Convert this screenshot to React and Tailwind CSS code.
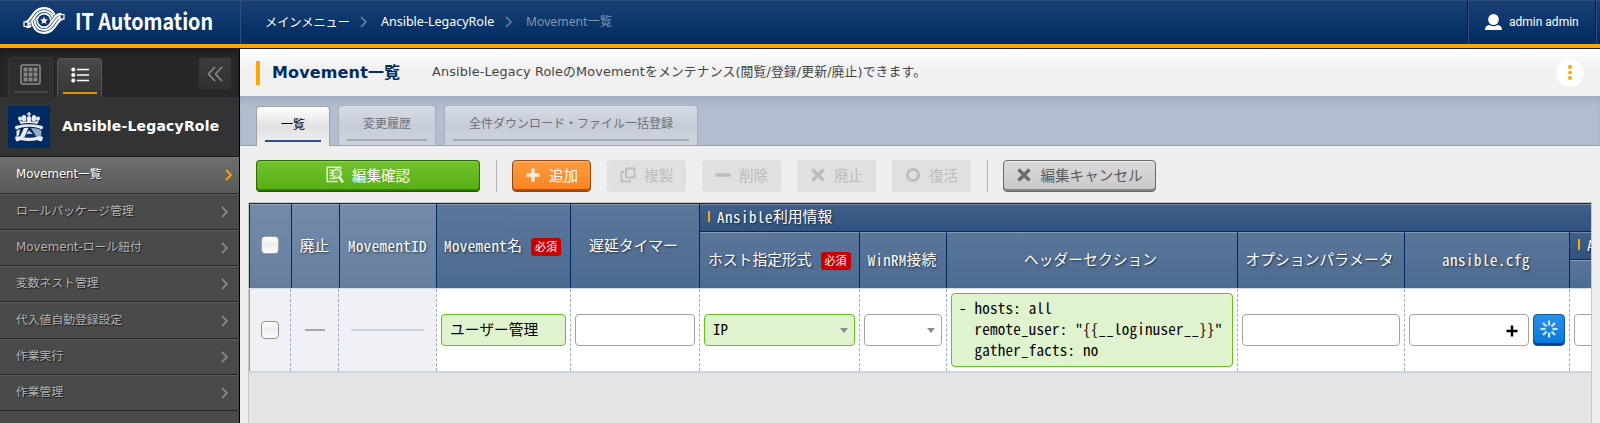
import React from "react";

const CHEVRON = "M1 1 L6 6 L1 11";
const UI = "font-['DejaVu_Sans','Noto_Sans_CJK_JP',sans-serif]";
const JP = "font-['Noto_Sans_CJK_JP',sans-serif]";
const MONO = "font-['Noto_Sans_Mono_CJK_JP','Liberation_Mono','Noto_Sans_CJK_JP',monospace]";

function Chevron({ className }) {
  return (
    <svg viewBox="0 0 7 12" className={className} fill="none" stroke="currentColor" strokeWidth="1.8">
      <path d={CHEVRON} />
    </svg>
  );
}

function LogoBand() {
  const d = "M3 18.500 L5.500 18 C11 15 12.500 5 21 5 C27 5 30 9.500 30.500 15";
  return (
    <g>
      <path d={d} stroke="#123767" strokeWidth="8.800" />
      <path d={d} stroke="#fff" strokeWidth="7.800" />
      <path d={d} stroke="#123767" strokeWidth="3.400" />
      <path d={d} stroke="#fff" strokeWidth="2" />
      <rect x="1" y="16" width="4" height="4.500" fill="#123767" stroke="#fff" strokeWidth="1.200" />
    </g>
  );
}

function Logo() {
  return (
    <svg viewBox="0 0 42 30" className="h-[30px] w-[42px] shrink-0" fill="none">
      <LogoBand />
      <g transform="rotate(180 21 14.500)"><LogoBand /></g>
      <circle cx="21" cy="14.500" r="5.900" fill="#0f3466" />
      <path fill="#fff" d="M21 10.500 L22.100 13.300 L25 13.400 L22.700 15.200 L23.500 18 L21 16.500 L18.500 18 L19.300 15.200 L17 13.400 L19.900 13.300 Z" />
    </svg>
  );
}

function RoleIcon() {
  return (
    <svg viewBox="0 0 42 42" className="h-[42px] w-[42px] shrink-0 bg-[#002b62]" fill="none">
      <g fill="#e9edf2">
        <path d="M20.300 6h1.400v1.500h1.500v1.300h-1.500v1.500h-1.400v-1.500h-1.500V7.500h1.500z" />
        <ellipse cx="21" cy="13.200" rx="2.200" ry="3.300" />
        <ellipse cx="16" cy="12.200" rx="2.300" ry="3.200" />
        <ellipse cx="26" cy="12.200" rx="2.300" ry="3.200" />
        <circle cx="12" cy="12.500" r="2" />
        <circle cx="30" cy="12.500" r="2" />
        <path d="M11 13.500 L14 15.500 L28 15.500 L31 13.500 L29.500 18 Q21 16.200 12.500 18 Z" />
        <path d="M7 21.500 Q7 19.500 10 19.500 Q21 17.200 32 19.500 Q35 19.500 35 21.500 Q35 23.500 33 23.500 Q30 21 21 20.800 Q12 21 9 23.500 Q7 23.500 7 21.500Z" />
        <path d="M8.500 25 L12 22.800 L11 29 L8.500 31 Z M11.800 31 L16 22 L20.500 21.800 L16.500 31 Z" />
        <path opacity=".65" d="M23 22 Q31 22 33.500 25 L33 31 L28.500 31 Z" />
        <path d="M21 24.500 L25 28.500 L21 27.500 L18 28.500 Z" />
        <path d="M7 31 Q9 30 12 30.500 Q21 33 30 30.500 Q33 30 35 31 L34 35 Q31 35.500 29.500 34 Q21 35.800 12.500 34 Q11 35.500 8 35 Z" />
      </g>
    </svg>
  );
}

const menu = [
  ["Movement一覧", "h-[37px]", "tracking-[-0.05px]"],
  ["ロールパッケージ管理", "h-[36px]", ""],
  ["Movement-ロール紐付", "h-[36px]", ""],
  ["変数ネスト管理", "h-[36px]", ""],
  ["代入値自動登録設定", "h-[37px]", ""],
  ["作業実行", "h-[36px]", ""],
  ["作業管理", "h-[36px]", ""],
];

function Sidebar() {
  return (
    <aside className="flex w-[240px] shrink-0 flex-col border-r border-black bg-[#494b4a]">
      <div className="flex h-12 items-end bg-[#262728] pl-2 shadow-[inset_0_4px_5px_rgba(0,0,0,0.25)]">
        <div className="flex h-10 w-[45px] flex-col items-center rounded-t border border-b-0 border-[#363738] bg-[#2d2e2f] pt-[6px]">
          <svg viewBox="0 0 21 21" className="h-[21px] w-[21px]" fill="none" stroke="#8d8d8d">
            <rect x="1" y="1" width="19" height="19" rx="2" strokeWidth="1.500" />
            <g fill="#858585" stroke="none">
              {[3.5, 8.5, 13.5].map((y) => [3.5, 8.5, 13.5].map((x) => <rect key={x + "-" + y} x={x} y={y} width="4" height="4" />))}
            </g>
          </svg>
          <span className="mt-[6px] h-[2px] w-[34px] bg-[#454647]" />
        </div>
        <div className="ml-1 flex h-[39px] w-[45px] flex-col items-center rounded-t border border-b-0 border-[#555] bg-gradient-to-b from-[#484a49] to-[#333435] pt-[8px]">
          <svg viewBox="0 0 18 16" className="h-4 w-[18px]" stroke="#fff" fill="#fff">
            {[2.5, 8, 13.5].map((y) => (
              <g key={y}>
                <circle cx="2.300" cy={y} r="1.800" strokeWidth="0.500" />
                <path d={`M6 ${y}H18`} strokeWidth="1.500" />
              </g>
            ))}
          </svg>
          <span className="mt-[9px] h-[2px] w-[34px] bg-[#e09500]" />
        </div>
        <div className="mb-2 ml-[97px] flex h-[31px] w-8 items-center justify-center rounded-[3px] bg-gradient-to-b from-[#3a3b3c] to-[#303132] text-[#858585] shadow-[0_0_1px_#444]">
          <svg viewBox="0 0 16 16" className="h-4 w-4" fill="none" stroke="currentColor" strokeWidth="1.800">
            <path d="M8 1 L1.500 8 L8 15 M15 1 L8.500 8 L15 15" />
          </svg>
        </div>
      </div>
      <div className="flex h-[60px] shrink-0 items-center border-b border-[#1c1d1d] bg-[#323334] pl-2">
        <RoleIcon />
        <h2 className={`ml-[12px] whitespace-nowrap text-[14px] font-bold tracking-[0.18px] text-white ${UI}`}>Ansible-LegacyRole</h2>
      </div>
      {menu.map(([label, h, tr], i) => (
        <div
          key={label}
          className={`flex shrink-0 items-center justify-between border-b border-[#292a2a] pl-4 ${h} ${
            i === 0 ? "bg-gradient-to-b from-[#6e706f] to-[#595b5a] pr-[7px] text-white" : "border-t border-t-[#5a5c5b] pr-[11px] text-[#b4b4b4]"
          }`}
        >
          <span className={`whitespace-nowrap text-[11.8px] [text-shadow:1px_1px_1px_rgba(0,0,0,0.7)] ${tr} ${UI}`}>{label}</span>
          <Chevron className={i === 0 ? "h-3 w-[7px] text-[#ffa500]" : "h-3 w-[7px] text-[#858686]"} />
        </div>
      ))}
    </aside>
  );
}

function Tab({ label, active, width }) {
  return (
    <div
      className={`flex flex-col items-center rounded-t-[4px] border border-b-0 text-[12px] ${width} ${JP} ${
        active
          ? "mb-[-1px] h-10 border-[#a0a2a8] bg-gradient-to-b from-white via-[#e2e2e2] to-[#efefef] text-black"
          : "h-10 border-[#a9b0bc] bg-gradient-to-b from-[#d6dce5] via-[#c6cdd8] to-[#ced4de] text-[#6c727a]"
      }`}
    >
      <span className="flex h-[33px] items-center whitespace-nowrap pt-[1px]">{label}</span>
      <span className={`h-[2px] self-stretch mx-2 ${active ? "bg-[#304f7c]" : "bg-[#a3a9b6]"}`} />
    </div>
  );
}

function ToolButton({ icon, label, className, gap = "gap-[8px]" }) {
  return (
    <button className={`flex h-8 shrink-0 items-center justify-center rounded-[4px] pb-[2px] text-[14.600px] ${gap} ${JP} ${className}`}>
      {icon}
      <span className="whitespace-nowrap">{label}</span>
    </button>
  );
}

function Icon({ children, size = "h-4 w-4", ...rest }) {
  return (
    <svg viewBox="0 0 16 16" className={size} fill="none" stroke="currentColor" strokeWidth="3.400" {...rest}>
      {children}
    </svg>
  );
}

const OFF = "w-[79px] bg-[#e0e0e0] text-[#bdbdbd]";

function Toolbar() {
  return (
    <div className="flex h-[56px] items-start pl-4 pt-[14px]">
      <ToolButton
        label="編集確認"
        className="w-[224px] border border-[#2c6a05] border-b-[#1f4f02] bg-gradient-to-b from-[#72c02f] to-[#57b00f] text-white shadow-[inset_0_-2px_0_#347a05,inset_0_1px_0_#8bd04f]"
        icon={
          <svg viewBox="0 0 18 18" className="h-[18px] w-[18px]" fill="none" stroke="#dff2cf" strokeWidth="1.500">
            <path d="M14.500 3V1.200H1.200V15.500H12" />
            <path d="M3.500 4.300H7M3.500 7H6M3.500 9.700H6M3.500 12.500H9" strokeWidth="1.300" />
            <circle cx="10.800" cy="7.500" r="4.300" fill="#dff2cf" fillOpacity=".25" strokeWidth="1.700" />
            <path d="M13.300 11 L17 16.500" strokeWidth="2.800" />
          </svg>
        }
      />
      <span className="ml-4 h-8 w-px bg-[#b5b5b5]" />
      <ToolButton
        label="追加"
        className="ml-[15px] w-[79px] border border-[#8c4a12] bg-gradient-to-b from-[#ff9a40] to-[#ff8420] text-white shadow-[inset_0_-2px_0_#a84e0a,inset_0_1px_0_#ffb573]"
        icon={<Icon opacity=".85"><path d="M8 1.500V14.500M1.500 8H14.500" /></Icon>}
      />
      <ToolButton
        label="複製"
        className={`ml-4 ${OFF}`}
        icon={<Icon strokeWidth="1.800"><path d="M6 1.500H14.500V10.500H6Z M4 5H1.500V14.500H10V12.500" /></Icon>}
      />
      <ToolButton label="削除" className={`ml-4 ${OFF}`} icon={<Icon><path d="M0.500 8H15.500" /></Icon>} />
      <ToolButton label="廃止" className={`ml-4 ${OFF}`} icon={<Icon><path d="M2.500 2.500L13.500 13.500M13.500 2.500L2.500 13.500" /></Icon>} />
      <ToolButton label="復活" className={`ml-4 ${OFF}`} icon={<Icon><circle cx="8" cy="8" r="5.500" strokeWidth="3" /></Icon>} />
      <span className="ml-4 h-8 w-px bg-[#b5b5b5]" />
      <ToolButton
        label="編集キャンセル"
        className="ml-[15px] w-[153px] border border-[#6a6a6a] bg-gradient-to-b from-[#dadada] to-[#c9c9c9] text-[#5c5c5c] shadow-[inset_0_-2px_0_#858585,inset_0_1px_0_#eee]"
        icon={<Icon stroke="#6d6d6d"><path d="M2.500 2.500L13.500 13.500M13.500 2.500L2.500 13.500" /></Icon>}
      />
    </div>
  );
}

/* Half-width letters run at half an em, slightly tracked beside full-width glyphs. */
function Latin({ children, className = "text-[15px] tracking-[0.25px]" }) {
  return <span className={`whitespace-pre ${className}`}>{children}</span>;
}

function Head({ children, className = "", tone = "mid" }) {
  const bg = {
    light: "bg-gradient-to-b from-[#728bab] to-[#667f9f]",
    mid: "bg-gradient-to-b from-[#5b7699] to-[#4d6a90]",
    dark: "bg-gradient-to-b from-[#41608a] to-[#31527f]",
  }[tone];
  return (
    <div
      className={`flex items-center overflow-hidden whitespace-nowrap border-l border-t border-[#002b62] pb-[2px] text-[14.800px] leading-none text-white shadow-[inset_0_1px_0_rgba(255,255,255,0.25)] [text-shadow:1px_1px_2px_rgba(0,0,0,0.6)] ${bg} ${className}`}
    >
      {children}
    </div>
  );
}

function Required() {
  return (
    <span className="ml-[9px] mt-[3px] flex h-[18px] w-[30px] shrink-0 items-center justify-center rounded-[3px] bg-[#c90000] text-[11px] [text-shadow:none]">
      必須
    </span>
  );
}

function Cell({ children, className = "" }) {
  return <div className={`flex items-center overflow-hidden ${className}`}>{children}</div>;
}

const DASH = "border-l border-dashed border-[#9badc6]";
const FIELD = "h-8 rounded-[4px] border border-[#a3a3a3] bg-white";
const EDITED = "rounded-[4px] border border-[#61c31b] bg-[#e0f3cf]";

function Check({ className = "border-[#929292]" }) {
  return <span className={`h-[18px] w-[18px] rounded-[4px] border bg-gradient-to-b from-white via-[#ececec] to-white ${className}`} />;
}

function Arrow() {
  return (
    <svg viewBox="0 0 8 5" className="h-[5px] w-2">
      <path d="M0 0H8L4 5Z" fill="#8c8c8c" />
    </svg>
  );
}

function Table() {
  return (
    <div className={`ml-2 mr-2 flex h-[221px] flex-col overflow-hidden border border-b-0 border-[#c8c8c8] bg-[#e4e4e4] font-light ${MONO}`}>
      <div className="grid h-[85px] shrink-0 grid-cols-[42px_48px_97px_134px_129px_160px_87px_291px_167px_165px_22px] grid-rows-[28px_28px_29px] border-b border-[#002b62]">
        <Head tone="light" className="row-span-3 justify-center pr-[1px]"><Check className="border-[#a39d98]" /></Head>
        <Head tone="light" className="row-span-3 justify-center pr-[2px]">廃止</Head>
        <Head tone="light" className="row-span-3 justify-center pr-[1px]"><Latin className="text-[15px] tracking-[0.4px]">MovementID</Latin></Head>
        <Head className="row-span-3 pl-[7px]"><Latin className="text-[15px] tracking-[0.4px]">Movement</Latin>名<Required /></Head>
        <Head className="row-span-3 justify-center pr-[3px]">遅延タイマー</Head>
        <Head tone="dark" className="col-span-6 pl-2">
          <span className="mr-[7px] h-[11px] w-[2px] bg-[#ffa500]" /><Latin className="text-[15px] tracking-[0.5px]">Ansible</Latin>利用情報
        </Head>
        <Head className="row-span-2 pl-2">ホスト指定形式<Required /></Head>
        <Head className="row-span-2 justify-center pr-[2px]"><Latin>WinRM</Latin>接続</Head>
        <Head className="row-span-2 justify-center pr-[3px]">ヘッダーセクション</Head>
        <Head className="row-span-2 justify-center pr-[3px]">オプションパラメータ</Head>
        <Head className="row-span-2 justify-center pr-[2px]"><Latin className="text-[15px] tracking-[0.5px]">ansible.cfg</Latin></Head>
        <Head tone="dark" className="pl-2">
          <span className="mr-[7px] h-[11px] w-[2px] shrink-0 bg-[#ffa500]" /><Latin>A</Latin>
        </Head>
        <Head />
      </div>
      <div className="grid h-[85px] shrink-0 grid-cols-[41px_48px_98px_134px_129px_160px_87px_291px_167px_165px_22px] border-b-2 border-t border-b-[#ccd5e3] border-t-[#d3dce8] bg-white">
        <Cell className="justify-center border-l border-[#8c9cb4] bg-[#eff1f6]"><Check /></Cell>
        <Cell className={`justify-center bg-[#eff1f6] ${DASH}`}><span className="h-[2px] w-5 bg-[#a5a8b0]" /></Cell>
        <Cell className={`justify-center bg-[#eff1f6] ${DASH}`}><span className="h-[2px] w-[73px] bg-[#cbd4e3]" /></Cell>
        <Cell className={`pl-1 ${DASH}`}>
          <span className={`flex h-8 w-[125px] items-center pb-[2px] pl-[8px] text-[14.700px] text-black ${EDITED}`}>ユーザー管理</span>
        </Cell>
        <Cell className={`pl-1 ${DASH}`}><span className={`w-[120px] ${FIELD}`} /></Cell>
        <Cell className={`pl-1 ${DASH}`}>
          <span className={`flex h-8 w-[151px] items-center justify-between pl-2 pr-[6px] text-[15px] text-black ${EDITED}`}><span className="pb-[2px]">IP</span><Arrow /></span>
        </Cell>
        <Cell className={`pl-1 ${DASH}`}>
          <span className={`flex w-[78px] items-center justify-end pr-[6px] ${FIELD}`}><Arrow /></span>
        </Cell>
        <Cell className={`pl-1 ${DASH}`}>
          <pre className={`h-[74px] w-[282px] pl-[7px] pt-[3px] text-[15px] leading-[21px] tracking-[0.25px] text-black ${MONO} ${EDITED}`}>{`- hosts: all
  remote_user: "{{__loginuser__}}"
  gather_facts: no`}</pre>
        </Cell>
        <Cell className={`pl-1 ${DASH}`}><span className={`w-[158px] ${FIELD}`} /></Cell>
        <Cell className={`gap-1 pl-1 ${DASH}`}>
          <span className={`flex w-[120px] items-center justify-end pr-[10px] ${FIELD}`}>
            <svg viewBox="0 0 12 12" className="mt-[2px] h-3 w-3" stroke="#000" strokeWidth="2.400"><path d="M6 0.500V11.500M0.500 6H11.500" /></svg>
          </span>
          <span className="flex h-8 w-8 items-center justify-center rounded-[4px] border border-[#0a58a4] bg-gradient-to-b from-[#2b8fe6] to-[#0078dc] pb-[3px] shadow-[inset_0_-2px_0_#063e78]">
            <svg viewBox="0 0 18 18" className="h-[18px] w-[18px]" stroke="#cfe6fb" strokeWidth="2.200">
              {[0, 45, 90, 135, 180, 225, 270, 315].map((a) => (
                <path key={a} d="M9 0.500V5.500" transform={`rotate(${a} 9 9)`} />
              ))}
            </svg>
          </span>
        </Cell>
        <Cell className={`pl-1 ${DASH}`}><span className={`w-[120px] shrink-0 ${FIELD}`} /></Cell>
      </div>
    </div>
  );
}

export default function App() {
  return (
    <div className="flex h-[423px] w-[1600px] flex-col overflow-hidden bg-[#efefef]">
      <header className="flex h-[49px] shrink-0 border-b border-[#1b1b1b]">
        <div className="flex flex-1 border-b-4 border-[#ffa500] bg-gradient-to-b from-[#1a4173] to-[#002b62] shadow-[inset_0_1px_0_#2b4e7c]">
          <div className="flex w-[240px] items-center pl-[23px] pb-[3px]">
            <Logo />
            <span className={`ml-[10px] origin-left scale-x-[0.875] whitespace-nowrap text-[22.500px] font-bold leading-none text-white ${JP}`}>IT Automation</span>
          </div>
          <nav className="flex flex-1 items-center border-l border-[#2d4f7c] pl-6 text-[12.500px] text-white">
            <span className={`w-[85px] whitespace-nowrap text-[12.200px] ${JP}`}>メインメニュー</span>
            <Chevron className="ml-[10px] h-3 w-[7px] text-[#5d7798]" />
            <span className="ml-[14px] w-[114px] whitespace-nowrap font-['Noto_Sans',sans-serif] text-[12.500px]">Ansible-LegacyRole</span>
            <Chevron className="ml-[10px] h-3 w-[7px] text-[#5d7798]" />
            <span className="ml-[14px] whitespace-nowrap font-['Noto_Sans','Noto_Sans_CJK_JP',sans-serif] text-[12.200px] text-[#8494ac]">Movement一覧</span>
          </nav>
          <div className="flex w-[128px] items-center border-x border-l-[#2d4f7c] border-r-[#001c45] pl-4 shadow-[-1px_0_0_#001c45]">
            <svg viewBox="0 0 17 16" className="h-4 w-[17px]" fill="#fff">
              <ellipse cx="8.500" cy="5.500" rx="5.300" ry="5.500" />
              <path d="M0 16 Q0 11.500 4.500 11 Q8.500 13.500 12.500 11 Q17 11.500 17 16Z" />
            </svg>
            <span className="ml-[7px] whitespace-nowrap font-['Roboto',sans-serif] text-[12px] text-white">admin admin</span>
          </div>
          <div className="w-[4px] border-l border-[#2d4f7c]" />
        </div>
      </header>
      <div className="flex min-h-0 flex-1">
        <Sidebar />
        <main className="flex min-w-0 flex-1 flex-col">
          <div className="flex h-[47px] shrink-0 items-center bg-gradient-to-b from-white to-[#f1f1f1] to-40% pl-4">
            <span className="h-6 w-1 bg-[#ffa500]" />
            <h1 className={`ml-3 w-[128px] whitespace-nowrap text-[16px] font-bold tracking-[0.15px] text-[#002b62] ${UI}`}>Movement一覧</h1>
            <p className={`ml-[32px] whitespace-nowrap pb-[1px] text-[12.800px] tracking-[0.15px] text-[#444] ${UI}`}>Ansible-Legacy RoleのMovementをメンテナンス(閲覧/登録/更新/廃止)できます。</p>
            <button className="ml-auto mr-4 flex h-7 w-7 flex-col items-center justify-center gap-[2px] rounded-full bg-white">
              <span className="h-[3.500px] w-[3.500px] rounded-full bg-[#ffa500]" />
              <span className="h-[3.500px] w-[3.500px] rounded-full bg-[#ffa500]" />
              <span className="h-[3.500px] w-[3.500px] rounded-full bg-[#ffa500]" />
            </button>
          </div>
          <div className="flex h-[50px] shrink-0 items-end gap-2 border-b border-[#a0a2a8] bg-[#b2bdcf] pl-4 shadow-[inset_0_8px_8px_-4px_#9cabbf]">
            <Tab label="一覧" active width="w-[74px]" />
            <Tab label="変更履歴" width="w-[98px]" />
            <Tab label="全件ダウンロード・ファイル一括登録" width="w-[254px]" />
          </div>
          <Toolbar />
          <Table />
        </main>
      </div>
    </div>
  );
}
